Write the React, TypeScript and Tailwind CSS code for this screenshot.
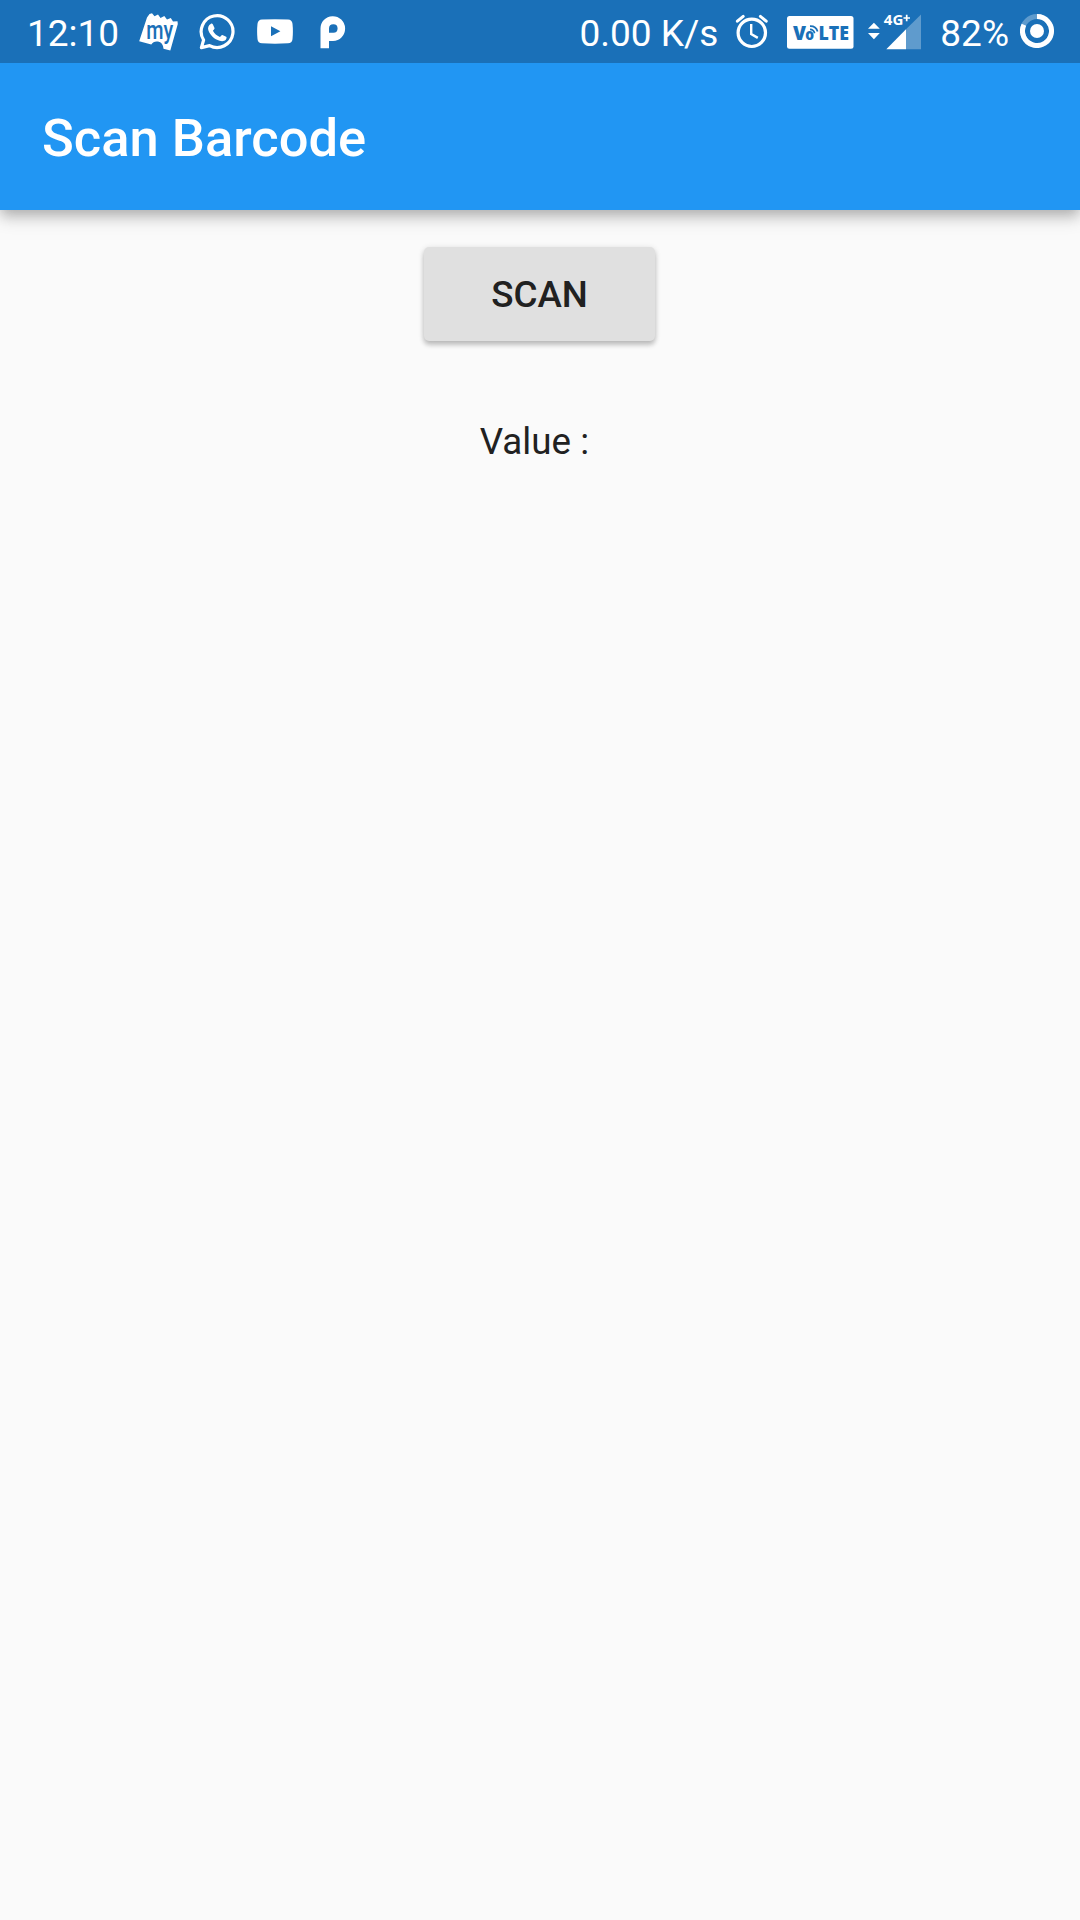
import React from "react";

function TicketIcon() {
  return (
    <svg className="ml-[19px] shrink-0 overflow-visible" width="40" height="40" viewBox="0 0 40 40">
      <path
        d="M10.5 2 L13 1.2 L15.5 4.3 L19 2.6 L21.5 6 L25.3 4 L28 7.6 L31.8 6 L34 9.6 L38.5 9.2 L38.8 12 L31.3 38.5 L24.5 36.8 Q24 30.5 19 29.5 Q14.5 28.8 12.3 32.5 L0.2 29.3 L8 5.5 Z"
        fill="#fff"
      />
      <text x="7.2" y="27" textLength="27" lengthAdjust="spacingAndGlyphs" fontFamily="Roboto, sans-serif" fontSize="25" fontWeight="500" fill="#1a70b8">
        my
      </text>
    </svg>
  );
}

function WhatsAppIcon() {
  return (
    <svg className="ml-[19px] shrink-0" width="38" height="38" viewBox="0 0 38 38" fill="none">
      <path
        d="M3.4 34.6 L5.6 27 A15.9 15.9 0 1 1 11.6 32.6 Z"
        stroke="#fff"
        strokeWidth="3.2"
        strokeLinejoin="round"
      />
      <path
        d="M13 10.7 C13.5 10.5 14.4 10.5 14.8 11.3 L16.5 15 C16.9 15.9 15.3 17.1 14.9 17.7 C16.4 20.5 18.7 22.6 21.9 23.9 C22.8 23.2 23.5 21.8 24.4 21.9 L28.2 23.8 C29 24.3 28.3 26.1 27.8 26.8 C26.2 28.4 23.9 28.6 21.6 27.8 C16.4 26 12.4 22.5 10.5 17.7 C9.4 14.9 10.4 12 13 10.7 Z"
        fill="#fff"
      />
    </svg>
  );
}

function YouTubeIcon() {
  return (
    <svg className="ml-[21px] shrink-0" width="36" height="25" viewBox="0 0 36 26" preserveAspectRatio="none">
      <path
        fillRule="evenodd"
        d="M5 .6 Q18 -.3 31 .6 Q35 .8 35.5 5 Q36.3 13 35.5 21 Q35 25 31 25.3 Q18 26.2 5 25.3 Q1 25 .5 21 Q-.3 13 .5 5 Q1 .8 5 .6 Z M14 7.5 V18 L23.4 12.8 Z"
        fill="#fff"
      />
    </svg>
  );
}

function PIcon() {
  return (
    <svg className="mt-[2px] ml-[27px] shrink-0" width="26" height="33" viewBox="0 0 26 33">
      <path
        fillRule="evenodd"
        d="M0.5 32.3 V13 A12.3 12.4 0 1 1 13 25 H9 V32.3 Z M9 16.8 V12.3 A4.3 4.3 0 1 1 13.3 16.8 Z"
        fill="#fff"
      />
    </svg>
  );
}

function AlarmIcon() {
  return (
    <svg className="mt-px ml-[17px] shrink-0" width="34" height="36" viewBox="0 0 34 36" fill="none" stroke="#fff">
      <circle cx="16.8" cy="18.8" r="13.7" strokeWidth="3.2" />
      <path d="M16.2 10 V20 L22.8 23.9" strokeWidth="2.4" />
      <path d="M2.4 7.2 L8.2 2.4 M31.2 7.2 L25.4 2.4" strokeWidth="3" strokeLinecap="round" />
    </svg>
  );
}

function VolteIcon() {
  return (
    <svg className="mt-[2px] mr-[-0.5px] ml-[17.5px] shrink-0 overflow-visible" width="67" height="33" viewBox="0 0 67 33">
      <rect width="66.5" height="32.7" rx="2.5" fill="#fff" />
      <g fill="#1a70b8" fontFamily="Open Sans, sans-serif" fontWeight="800">
        <text x="6" y="23.6" fontSize="18.5" textLength="13" lengthAdjust="spacingAndGlyphs">V</text>
        <text x="18.2" y="23.6" fontSize="15" textLength="8.8" lengthAdjust="spacingAndGlyphs">o</text>
        <text x="31.5" y="23.6" fontSize="18.5" textLength="30.5" lengthAdjust="spacingAndGlyphs">LTE</text>
      </g>
      <path d="M23 13.4 Q26.6 13.4 27.6 17.3 M23 10.2 Q29 10 30.6 15.5" fill="none" stroke="#1a70b8" strokeWidth="1.7" />
    </svg>
  );
}

function SignalIcon() {
  return (
    <svg className="ml-[15px] shrink-0 overflow-visible" width="54" height="36" viewBox="0 0 54 36">
      <path d="M0 14.8 L5.9 8.7 L11.8 14.8 Z M0 19 H11.8 L5.9 25.2 Z" fill="#fff" />
      <path d="M53 0.6 V35.3 H38 V15.3 Z" fill="#fff" fillOpacity=".3" />
      <path d="M18.3 35.3 L38 15.3 V35.3 Z" fill="#fff" />
      <text x="15.8" y="11.2" fontFamily="Open Sans, sans-serif" fontSize="14" fontWeight="700" fill="#fff" textLength="19.5" lengthAdjust="spacingAndGlyphs">
        4G
      </text>
      <path d="M35.5 4 H42 M38.7 0.8 V7.3" stroke="#fff" strokeWidth="1.7" />
    </svg>
  );
}

function BatteryIcon() {
  return (
    <svg className="mb-px ml-[11px] shrink-0" width="34" height="34" viewBox="0 0 34 34" fill="none">
      <circle cx="17" cy="17" r="14.5" stroke="#fff" strokeOpacity=".3" strokeWidth="5" />
      <path d="M17 2.5 A14.5 14.5 0 1 1 3.9 10.8" stroke="#fff" strokeWidth="5" />
      <circle cx="17" cy="17" r="7" fill="#fff" />
    </svg>
  );
}

function StatusBar() {
  return (
    <div className="flex h-[63px] items-center justify-between bg-[#1a70b8] pr-[26px] pl-[27px] text-[37px] leading-none whitespace-nowrap text-white">
      <div className="flex items-center">
        <span className="w-[93px] pt-[3px]">12:10</span>
        <TicketIcon />
        <WhatsAppIcon />
        <YouTubeIcon />
        <PIcon />
      </div>
      <div className="flex items-center">
        <span className="pt-[3px]">0.00 K/s</span>
        <AlarmIcon />
        <VolteIcon />
        <SignalIcon />
        <span className="ml-[18px] pt-[3px]">82%</span>
        <BatteryIcon />
      </div>
    </div>
  );
}

export default function App() {
  return (
    <div className="flex min-h-[1920px] w-[1080px] flex-col bg-[#fafafa] font-[Roboto,sans-serif] text-[#212121]">
      <header className="relative shadow-[0_5px_12px_-1px_rgba(0,0,0,0.2),0_9px_16px_rgba(0,0,0,0.14)]">
        <StatusBar />
        <div className="flex h-[147px] items-center bg-[#2196f3] px-[42px] pt-[4px]">
          <h1 className="text-[52.5px] leading-none font-medium text-white">Scan Barcode</h1>
        </div>
      </header>
      <main className="flex flex-col items-center pt-[37px] pr-px">
        <button className="h-[94px] w-[231px] rounded-[5px] bg-[#e0e0e0] pt-[2px] text-[36.75px] leading-none font-medium shadow-[0_4px_5px_rgba(0,0,0,0.2),0_1px_6px_rgba(0,0,0,0.12)]">
          SCAN
        </button>
        <p className="mt-[79px] pr-px text-[36.75px] leading-[43px] whitespace-pre">{"Value : "}</p>
      </main>
    </div>
  );
}
